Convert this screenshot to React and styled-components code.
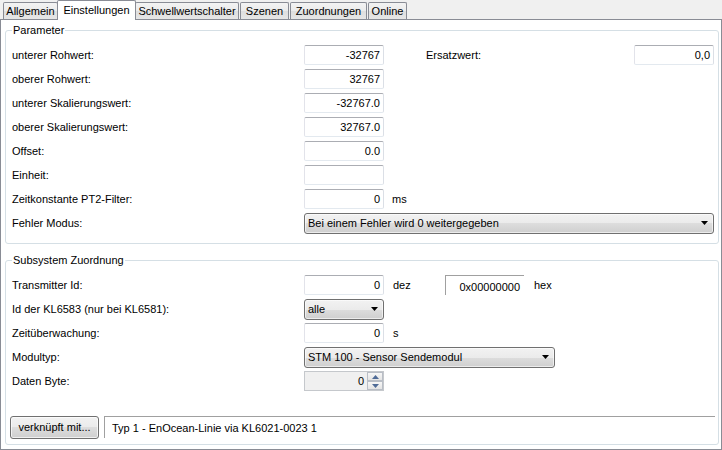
import React from "react";
import styled, { createGlobalStyle } from "styled-components";

const GlobalStyle = createGlobalStyle`
  html, body {
    margin: 0;
    padding: 0;
    background: #f0f0f0;
  }
  body {
    font-family: "Liberation Sans", Arial, sans-serif;
    font-size: 11px;
    color: #000;
  }
`;

const Window = styled.div`
  width: 722px;
  height: 450px;
  display: flex;
  flex-direction: column;
  background: #f0f0f0;
  overflow: hidden;
`;

const TabStrip = styled.div`
  position: relative;
  z-index: 2;
  height: 20px;
  display: flex;
  align-items: flex-end;
  padding-left: 3px;
`;

const Tab = styled.div`
  box-sizing: border-box;
  width: ${(p) => p.$w}px;
  height: ${(p) => (p.$active ? 20 : 17)}px;
  margin-bottom: ${(p) => (p.$active ? 0 : 1)}px;
  margin-right: ${(p) => p.$mr || 0}px;
  border: 1px solid #898c95;
  border-bottom: none;
  border-radius: 2px 2px 0 0;
  background: ${(p) =>
    p.$active ? "#fff" : "linear-gradient(#f3f3f3, #ebebeb 50%, #dedede 50%, #e6e6e6)"};
  display: flex;
  align-items: center;
  justify-content: center;
  padding-bottom: ${(p) => (p.$active ? 2 : 0)}px;
  white-space: nowrap;
`;

const Panel = styled.div`
  box-sizing: border-box;
  margin-top: -1px;
  height: 431px;
  background: #fff;
  border: 1px solid #898c95;
  display: flex;
  flex-direction: column;
`;

const Group = styled.fieldset`
  margin: ${(p) => p.$mt}px 2px ${(p) => p.$mb || 0}px 4px;
  padding: 8px 6px ${(p) => p.$pb}px 6px;
  border: 1px solid #d5dfe5;
  border-radius: 3px;
  min-width: 0;
  display: flex;
  flex-direction: column;
  gap: 4px;
`;

const Legend = styled.legend`
  padding: 0 1px;
  line-height: 13px;
`;

const Row = styled.div`
  height: ${(p) => p.$h || 20}px;
  display: flex;
  align-items: center;
`;

const Label = styled.span`
  width: ${(p) => p.$w || 292}px;
  flex: none;
  white-space: nowrap;
`;

const TextBox = styled.div`
  box-sizing: border-box;
  width: ${(p) => p.$w || 80}px;
  height: 20px;
  border: 1px solid;
  border-color: #abadb3 #dbdfe6 #e3e9ef #e2e3ea;
  border-radius: 2px;
  background: #fff;
  display: flex;
  align-items: center;
  justify-content: flex-end;
  padding-right: 3px;
  flex: none;
`;

const Unit = styled.span`
  margin-left: ${(p) => p.$ml || 9}px;
  width: ${(p) => (p.$w ? `${p.$w}px` : "auto")};
  flex: none;
`;

const Sunken = styled.div`
  box-sizing: border-box;
  width: ${(p) => p.$w}px;
  height: ${(p) => p.$h || 20}px;
  border-top: 1px solid #a0a0a0;
  border-left: 1px solid #a0a0a0;
  display: flex;
  align-items: center;
  justify-content: ${(p) => (p.$left ? "flex-start" : "flex-end")};
  padding: ${(p) => (p.$left ? "1px 0 0 7px" : "2px 4px 0 0")};
  flex: none;
`;

const Combo = styled.div`
  box-sizing: border-box;
  width: ${(p) => p.$w}px;
  height: 21px;
  border: 1px solid #707070;
  border-radius: 3px;
  background: linear-gradient(#f2f2f2, #ebebeb 50%, #dddddd 50%, #cfcfcf);
  display: flex;
  align-items: center;
  justify-content: space-between;
  padding: 0 5px 0 3px;
  flex: none;
  box-shadow: inset 0 0 0 1px rgba(255, 255, 255, 0.6);
`;

const Spinner = styled.div`
  box-sizing: border-box;
  width: 80px;
  height: 20px;
  border: 1px solid #c5c8cc;
  background: #f0f0f0;
  display: flex;
  align-items: center;
  justify-content: flex-end;
  flex: none;
`;

const SpinValue = styled.span`
  padding-right: 3px;
`;

const SpinButtons = styled.div`
  width: 16px;
  height: 18px;
  display: flex;
  flex-direction: column;
  gap: 0;
`;

const SpinButton = styled.div`
  box-sizing: border-box;
  height: 9px;
  border: 1px solid #b9bec6;
  background: linear-gradient(#f7f7f7, #e4e4e4);
  display: flex;
  align-items: center;
  justify-content: center;
`;

const BottomRow = styled.div`
  margin-top: 21px;
  height: 22px;
  display: flex;
  align-items: center;
  margin-left: -2px;
`;

const Button = styled.div`
  box-sizing: border-box;
  width: 89px;
  height: 23px;
  border: 1px solid #707070;
  border-radius: 3px;
  background: linear-gradient(#f2f2f2, #ebebeb 50%, #dddddd 50%, #cfcfcf);
  box-shadow: inset 0 0 0 1px rgba(255, 255, 255, 0.7);
  display: flex;
  align-items: center;
  justify-content: center;
  margin-right: 5px;
  flex: none;
`;

const Arrow = () => (
  <svg width="7" height="4" viewBox="0 0 7 4">
    <path d="M0 0h7L3.5 4z" fill="#000" />
  </svg>
);

const SpinArrow = ({ up }) => (
  <svg width="7" height="4" viewBox="0 0 7 4">
    <path d={up ? "M0 4h7L3.5 0z" : "M0 0h7L3.5 4z"} fill="#4f6b97" />
  </svg>
);

const tabs = [
  { name: "Allgemein", w: 55 },
  { name: "Einstellungen", w: 79, active: true, ml: -1 },
  { name: "Schwellwertschalter", w: 104, ml: -1 },
  { name: "Szenen", w: 49, ml: 1 },
  { name: "Zuordnungen", w: 77, ml: 1 },
  { name: "Online", w: 39, ml: 1 },
];

const params = [
  ["oberer Rohwert:", "32767"],
  ["unterer Skalierungswert:", "-32767.0"],
  ["oberer Skalierungswert:", "32767.0"],
  ["Offset:", "0.0"],
  ["Einheit:", ""],
];

export default function App() {
  return (
    <>
      <GlobalStyle />
      <Window>
        <TabStrip>
          {tabs.map((t) => (
            <Tab key={t.name} $w={t.w} $active={t.active} style={{ marginLeft: t.ml || 0 }}>
              {t.name}
            </Tab>
          ))}
        </TabStrip>
        <Panel>
          <Group $mt={4} $pb={10}>
            <Legend>Parameter</Legend>
            <Row>
              <Label>unterer Rohwert:</Label>
              <TextBox>-32767</TextBox>
              <Unit $ml={42} $w={208}>Ersatzwert:</Unit>
              <TextBox>0,0</TextBox>
            </Row>
            {params.map(([label, value]) => (
              <Row key={label}>
                <Label>{label}</Label>
                <TextBox>{value}</TextBox>
              </Row>
            ))}
            <Row>
              <Label>Zeitkonstante PT2-Filter:</Label>
              <TextBox>0</TextBox>
              <Unit $ml={8}>ms</Unit>
            </Row>
            <Row>
              <Label>Fehler Modus:</Label>
              <Combo $w={410}>
                <span>Bei einem Fehler wird 0 weitergegeben</span>
                <Arrow />
              </Combo>
            </Row>
          </Group>

          <Group $mt={10} $pb={6} $mb={3}>
            <Legend>Subsystem Zuordnung</Legend>
            <Row>
              <Label>Transmitter Id:</Label>
              <TextBox>0</TextBox>
              <Unit $w={52}>dez</Unit>
              <Sunken $w={79}>0x00000000</Sunken>
              <Unit $ml={10}>hex</Unit>
            </Row>
            <Row>
              <Label>Id der KL6583 (nur bei KL6581):</Label>
              <Combo $w={80}>
                <span>alle</span>
                <Arrow />
              </Combo>
            </Row>
            <Row>
              <Label>Zeitüberwachung:</Label>
              <TextBox>0</TextBox>
              <Unit>s</Unit>
            </Row>
            <Row>
              <Label>Modultyp:</Label>
              <Combo $w={251}>
                <span>STM 100 - Sensor Sendemodul</span>
                <Arrow />
              </Combo>
            </Row>
            <Row>
              <Label>Daten Byte:</Label>
              <Spinner>
                <SpinValue>0</SpinValue>
                <SpinButtons>
                  <SpinButton>
                    <SpinArrow up />
                  </SpinButton>
                  <SpinButton>
                    <SpinArrow />
                  </SpinButton>
                </SpinButtons>
              </Spinner>
            </Row>
            <BottomRow>
              <Button>verknüpft mit...</Button>
              <Sunken $w={611} $h={22} $left>
                Typ 1 - EnOcean-Linie via KL6021-0023 1
              </Sunken>
            </BottomRow>
          </Group>
        </Panel>
      </Window>
    </>
  );
}
